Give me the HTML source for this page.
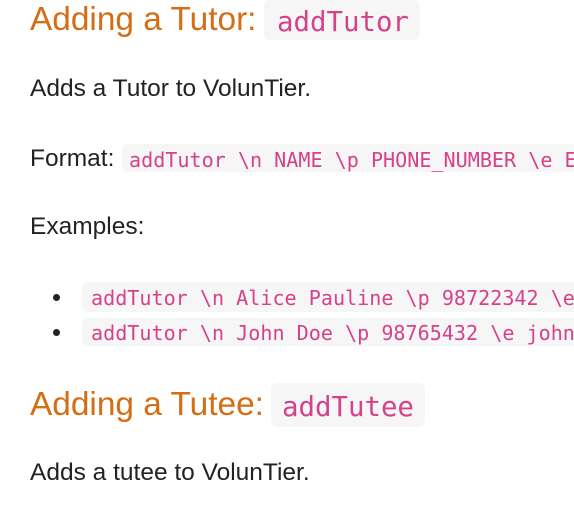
<!DOCTYPE html>
<html><head><meta charset="utf-8"><style>
html,body{margin:0;padding:0;background:#fff;width:574px;height:505px;overflow:hidden;position:relative}
.t{position:absolute;left:30px;font-family:"Liberation Sans",sans-serif;color:#222;font-size:24.5px;white-space:nowrap;line-height:1}
.h{position:absolute;left:30px;font-family:"Liberation Sans",sans-serif;color:#d46d14;font-size:33.4px;white-space:nowrap;line-height:1}
.c{position:absolute;background:#f6f6f6;border-radius:6px;font-family:"DejaVu Sans Mono",monospace;color:#d6428a;white-space:nowrap;line-height:1;overflow:hidden}
.b{position:absolute;left:53px;width:7px;height:7px;border-radius:50%;background:#222}
</style></head><body>
<div class="h" style="top:3px">Adding a Tutor:</div>
<div class="c" style="left:264px;top:0;width:156px;height:40px;font-size:27.4px"><span style="position:absolute;left:13px;top:9px">addTutor</span></div>
<div class="t" style="top:77px">Adds a Tutor to VolunTier.</div>
<div class="t" style="top:147px">Format:</div>
<div class="c" style="left:122px;top:144px;width:452px;height:28px;border-radius:6px 0 0 6px;font-size:20.1px"><span style="position:absolute;left:7px;top:6px">addTutor \n NAME \p PHONE_NUMBER \e EMAIL</span></div>
<div class="t" style="top:215px">Examples:</div>
<div class="b" style="top:294px"></div>
<div class="c" style="left:82px;top:282px;width:492px;height:30px;border-radius:6px 0 0 6px;font-size:20.1px"><span style="position:absolute;left:9px;top:6px">addTutor \n Alice Pauline \p 98722342 \e alice</span></div>
<div class="b" style="top:329px"></div>
<div class="c" style="left:82px;top:318px;width:492px;height:28px;border-radius:6px 0 0 6px;font-size:20.1px"><span style="position:absolute;left:9px;top:5px">addTutor \n John Doe \p 98765432 \e johndoe</span></div>
<div class="h" style="top:388px">Adding a Tutee:</div>
<div class="c" style="left:271px;top:383px;width:154px;height:44px;font-size:27.4px"><span style="position:absolute;left:11px;top:11px">addTutee</span></div>
<div class="t" style="top:461px">Adds a tutee to VolunTier.</div>
</body></html>
